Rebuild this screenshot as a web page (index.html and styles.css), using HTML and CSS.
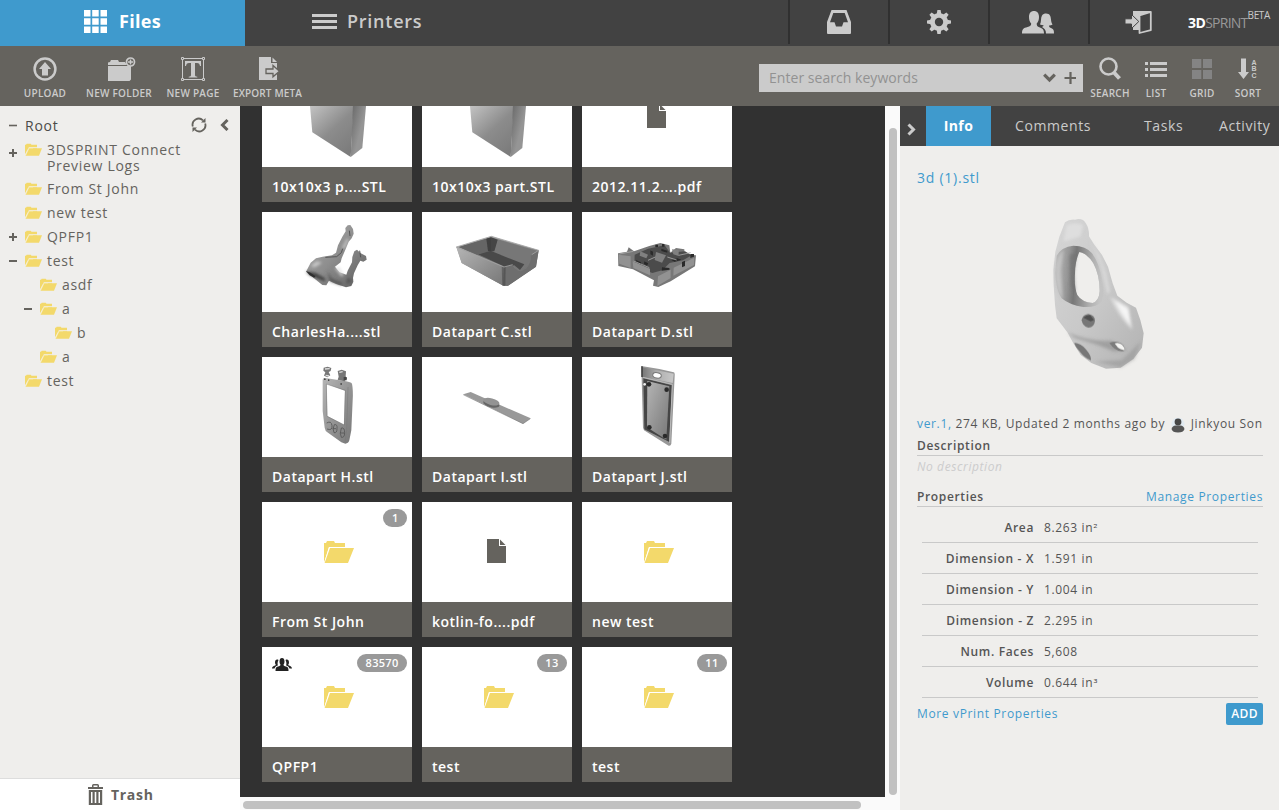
FILE: index.html
```html
<!DOCTYPE html>
<html lang="en">
<head>
<meta charset="utf-8">
<title>3DSPRINT Files</title>
<link rel="stylesheet" href="styles.css">
</head>
<body>
<svg class="defs" width="0" height="0">
  <defs>
    <linearGradient id="gBox" gradientUnits="userSpaceOnUse" x1="46" y1="30" x2="92" y2="80"><stop offset="0" stop-color="#d0d0d0"/><stop offset=".6" stop-color="#8c8c8c"/><stop offset="1" stop-color="#7c7c7c"/></linearGradient>
    <linearGradient id="gSide" gradientUnits="userSpaceOnUse" x1="92" y1="39" x2="104" y2="42"><stop offset="0" stop-color="#707070"/><stop offset="1" stop-color="#959595"/></linearGradient>
    <linearGradient id="gSkin" x1="0" y1="0" x2="1" y2="1"><stop offset="0" stop-color="#b0b0b0"/><stop offset="0.5" stop-color="#8d8d8d"/><stop offset="1" stop-color="#5c5c5c"/></linearGradient>
    <linearGradient id="gDev" x1="0" y1="0" x2="1" y2="1"><stop offset="0" stop-color="#b5b5b5"/><stop offset="0.6" stop-color="#8f8f8f"/><stop offset="1" stop-color="#777"/></linearGradient>
    <linearGradient id="gTop" x1="0" y1="0" x2="1" y2="0"><stop offset="0" stop-color="#777"/><stop offset="0.5" stop-color="#b0b0b0"/><stop offset="1" stop-color="#c8c8c8"/></linearGradient>
    <linearGradient id="gBone" x1="0" y1="0" x2="1" y2="1"><stop offset="0" stop-color="#d6d6d6"/><stop offset="0.5" stop-color="#c9c9c9"/><stop offset="1" stop-color="#b2b2b2"/></linearGradient>
    <linearGradient id="gHole" x1="0" y1="0" x2="1" y2="0.1"><stop offset="0" stop-color="#bcbcbc"/><stop offset="0.3" stop-color="#959595"/><stop offset="0.45" stop-color="#777"/><stop offset="0.8" stop-color="#b0b0b0"/><stop offset="1" stop-color="#c4c4c4"/></linearGradient>
    <filter id="soft" x="-20%" y="-20%" width="140%" height="140%"><feGaussianBlur stdDeviation="4"/></filter>
    <filter id="soft1" x="-10%" y="-10%" width="120%" height="120%"><feGaussianBlur stdDeviation="1.2"/></filter>
  </defs>
  <symbol id="folder" viewBox="0 0 30 22"><path fill="#f3d96b" d="M0 22V2h2l1-2h7l1 2h10v4H5z"/><path fill="#fff" d="M0 22L5 6h16v1H6L1 22z"/><path fill="#f3d96b" d="M6 7h24l-6 15H.6z"/></symbol>
  <symbol id="folder-s" viewBox="0 0 17 12.5"><path fill="#f3d96b" d="M0 11V1.500h1L1.700.5h4l.8 1H12v2.300H4z"/><path fill="#f5df86" d="M3.500 4.500H12v1H3z"/><path fill="#f3d96b" d="M4 5h13l-3 7.500H.5z"/><path fill="none" stroke="#faf0c0" stroke-width=".7" d="M.6 12L4 4.700h4"/></symbol>
  <symbol id="file" viewBox="0 0 19 24"><path fill="#65635e" d="M0 0h12v7h7v17H0z"/><path fill="#65635e" d="M13 .5L18.500 6H13z"/></symbol>
  <symbol id="box" viewBox="0 0 150 100"><path fill="url(#gBox)" d="M46 8L92 14 91.700 39 88.700 90 50.300 65.300 48 39z"/><path fill="url(#gSide)" d="M92 14l13-4-1 29-3.700 42L88.700 90z"/></symbol>
</svg>

<div class="app">
  <header class="top">
    <div class="tab tab-files"><svg width="23" height="23" viewBox="0 0 23 23"><path fill="#fff" d="M0 0h6.500v6.500H0zM8.200 0h6.500v6.500H8.200zM16.500 0H23v6.500h-6.500zM0 8.200h6.500v6.500H0zM8.200 8.200h6.500v6.500H8.200zM16.500 8.200H23v6.500h-6.500zM0 16.500h6.500V23H0zM8.200 16.500h6.500V23H8.200zM16.500 16.500H23V23h-6.500z"/></svg><span>Files</span></div>
    <div class="tab tab-printers"><svg width="25" height="15" viewBox="0 0 25 15"><path fill="#cbcbcb" d="M0 0h25v3H0zM0 6h25v3H0zM0 12h25v3H0z"/></svg><span>Printers</span></div>
    <nav class="actions">
      <a class="action"><svg width="24" height="24" viewBox="0 0 24 24"><path fill="#cbcbcb" fill-rule="evenodd" d="M4.500 0h15L24 12v11a1 1 0 0 1-1 1H1a1 1 0 0 1-1-1V12zM6.300 3L3 12.200h4.500l1.500 4.300h6l1.500-4.300H21L17.700 3z"/></svg></a>
      <a class="action"><svg width="24" height="24" viewBox="-12 -12 24 24"><g fill="#cbcbcb"><path d="M-2.300-8L-1.600-12h3.200L2.300-8V8L1.600 12h-3.200L-2.300 8z" id="tooth"/><use href="#tooth" transform="rotate(45)"/><use href="#tooth" transform="rotate(90)"/><use href="#tooth" transform="rotate(135)"/><circle r="9"/></g><circle r="4.200" fill="#424242"/></svg></a>
      <a class="action shift"><svg width="32" height="23" viewBox="0 0 32 23"><path fill="#cbcbcb" d="M7 6C7 2 9 0 12 0s5 2 5 6c0 3-.8 5-2.300 6.500 0 2 .5 3 2 3.500 3.500 1.200 5.300 2 5.300 6.500H0c0-4.500 1.500-5.500 5.500-6.500 2.500-.7 3.700-1.200 3.700-3.500C7.700 11 7 9 7 6z"/><path fill="#cbcbcb" d="M18 13.500c1.500-3 .5-6.500 2-9C21 3 22.500 2.500 24 2.500c4 0 4.800 3 5 6 .2 2 .5 3.500 1.500 5-1 .8-2.500 1-3.500 1 0 1.500.8 2 2.500 2.800 2 1 2.500 2.200 2.500 5.200h-8c0-3.500-1.500-5-4-6.500 1.200-.5 1.500-1 1.500-1.700-1.200 0-2.500-.2-3.500-.8z"/></svg></a>
      <a class="action shift"><svg width="27" height="24" viewBox="0 0 27 24"><path fill="#cbcbcb" d="M8 1h18v3l-11 3v13H8z"/><path fill="#424242" stroke="#cbcbcb" stroke-width="1.800" stroke-linejoin="round" d="M14.500 5.500L25.800 1.800v18.400L14.500 23z"/><path fill="#cbcbcb" stroke="#424242" stroke-width="1" d="M0 8.800h6.500V4.500L13.800 11.500 6.500 18.500V14H0z"/></svg></a>
      <div class="logo"><b>3D</b><span>SPRINT</span><sup>BETA</sup></div>
    </nav>
  </header>

  <div class="toolbar">
    <div class="tools">
      <div class="tool t-upload"><svg width="24" height="24" viewBox="0 0 24 24"><circle cx="12" cy="12" r="10.400" fill="none" stroke="#cbcbcb" stroke-width="2.500"/><path fill="#cbcbcb" d="M12 5l6 7h-3v6.500H9V12H6z"/></svg><span>UPLOAD</span></div>
      <div class="tool t-folder"><svg width="28" height="24" viewBox="0 0 28 24"><path fill="#cbcbcb" d="M0 24V9h23v13.500L21.500 24zM0 8V5.500l2-.5 1-2h7l1 2h6l2 3z"/><circle cx="22.500" cy="5" r="4" fill="#65635e" stroke="#cbcbcb" stroke-width="1.700"/><path stroke="#cbcbcb" stroke-width="1.500" d="M20 5h5M22.500 2.500v5"/></svg><span>NEW FOLDER</span></div>
      <div class="tool t-page"><svg width="26" height="26" viewBox="0 0 26 26"><path fill="none" stroke="#cbcbcb" d="M2.500 2.500h21v21h-21z"/><path fill="#65635e" stroke="#cbcbcb" d="M1.500 1.500h2v2h-2zM22.500 1.500h2v2h-2zM1.500 22.500h2v2h-2zM22.500 22.500h2v2h-2z"/><path fill="#cbcbcb" d="M5 5h16v5h-1c-.4-2-1-3-3-3h-2v12c0 1.200.6 1.500 2.300 1.700v.8H8.700v-.8c1.700-.2 2.300-.5 2.300-1.700V7H9C7 7 6.400 8 6 10H5z"/></svg><span>NEW PAGE</span></div>
      <div class="tool t-export"><svg width="22" height="23" viewBox="0 0 22 23"><path fill="#cbcbcb" d="M1 0h12v6h6v17H1z"/><path fill="#cbcbcb" d="M14.500.5L19 5h-4.500z"/><path fill="#cbcbcb" stroke="#65635e" stroke-width="1.300" d="M8 12h7V8.500l6.500 5.700-6.500 5.600V16.500H8z"/></svg><span>EXPORT META</span></div>
    </div>
    <div class="search"><span class="placeholder">Enter search keywords</span><svg width="34" height="12" viewBox="0 0 34 12"><path fill="none" stroke="#65635e" stroke-width="3.200" d="M2.200 2.700L7.500 8l5.300-5.300"/><path stroke="#65635e" stroke-width="2.200" d="M22.500 6h12M28.500 0v12"/></svg></div>
    <div class="views">
      <div class="view v-search"><svg width="22" height="24" viewBox="0 0 22 24"><circle cx="9.500" cy="9.500" r="8" fill="none" stroke="#cbcbcb" stroke-width="2.600"/><path stroke="#cbcbcb" stroke-width="4" d="M14.500 15l6 6.500"/></svg><span>SEARCH</span></div>
      <div class="view v-list"><svg width="22" height="24" viewBox="0 0 22 24"><path fill="#cbcbcb" d="M0 5h3v3H0zM5 5h17v3H5zM0 11h3v3H0zM5 11h17v3H5zM0 17h3v3H0zM5 17h17v3H5z"/></svg><span>LIST</span></div>
      <div class="view v-grid"><svg width="20" height="24" viewBox="0 0 20 24"><path fill="#848484" d="M0 2h9.300v9H0zM11 2h9v9h-9zM0 13h9.300v9H0zM11 13h9v9h-9z"/></svg><span>GRID</span></div>
      <div class="view v-sort"><svg width="20" height="24" viewBox="0 0 20 24"><path fill="#cbcbcb" d="M3 1.500h5V15h3L5.500 22 0 15h3z"/><g class="abc"><text x="13.500" y="7.500">A</text><text x="13.500" y="14">B</text><text x="13.500" y="20.500">C</text></g></svg><span>SORT</span></div>
    </div>
  </div>

  <main class="body">
    <aside class="side">
      <div class="root"><svg class="tg" width="8" height="8" viewBox="0 0 8 8"><path stroke="#65635e" stroke-width="1.600" d="M0 3.500h8"/></svg><span>Root</span>
        <svg class="refresh" width="16" height="16" viewBox="0 0 16 16"><path fill="none" stroke="#65635e" stroke-width="1.800" d="M1.800 9.500A6.200 6.200 0 0 1 12 3.300M14.200 6.500A6.200 6.200 0 0 1 4 12.700"/><path fill="#65635e" d="M14.500 1v4.500H10zM1.500 15v-4.500H6z"/></svg>
        <svg width="9" height="12" viewBox="0 0 9 12"><path fill="none" stroke="#65635e" stroke-width="3" d="M7.500 1L2.500 6l5 5"/></svg></div>
      <ul class="tree">
        <li class="two"><i class="plus"></i><svg class="fs"><use href="#folder-s"/></svg><span>3DSPRINT Connect Preview Logs</span></li>
        <li><i></i><svg class="fs"><use href="#folder-s"/></svg><span>From St John</span></li>
        <li><i></i><svg class="fs"><use href="#folder-s"/></svg><span>new test</span></li>
        <li><i class="plus"></i><svg class="fs"><use href="#folder-s"/></svg><span>QPFP1</span></li>
        <li><i class="minus"></i><svg class="fs"><use href="#folder-s"/></svg><span>test</span></li>
        <li class="l1"><i></i><svg class="fs"><use href="#folder-s"/></svg><span>asdf</span></li>
        <li class="l1"><i class="minus"></i><svg class="fs"><use href="#folder-s"/></svg><span>a</span></li>
        <li class="l2"><i></i><svg class="fs"><use href="#folder-s"/></svg><span>b</span></li>
        <li class="l1"><i></i><svg class="fs"><use href="#folder-s"/></svg><span>a</span></li>
        <li><i></i><svg class="fs"><use href="#folder-s"/></svg><span>test</span></li>
      </ul>
      <div class="trash"><svg width="15" height="21" viewBox="0 0 15 21"><path fill="#65635e" fill-rule="evenodd" d="M4 3V1.500Q4 0 5.500 0h4Q11 0 11 1.500V3h4v2H0V3zM5.500 3h4V1.500h-4zM.8 6h13.400v15H.8zM3 8v11h1.500V8zM6.700 8v11h1.600V8zM10.500 8v11H12V8z"/></svg><span>Trash</span></div>
    </aside>

    <section class="content">
      <div class="viewport">
        <div class="cards">
          <div class="card"><div class="thumb"><svg width="150" height="100"><use href="#box"/></svg></div><p>10x10x3 p....STL</p></div>
          <div class="card"><div class="thumb"><svg width="150" height="100"><use href="#box"/></svg></div><p>10x10x3 part.STL</p></div>
          <div class="card"><div class="thumb"><svg class="doc"><use href="#file"/></svg></div><p>2012.11.2....pdf</p></div>

          <div class="card"><div class="thumb"><svg width="150" height="100" viewBox="0 0 450 300"><g filter="url(#soft1)"><path fill="url(#gSkin)" d="M132 179l14-27 16-13 20-5 28-4 12-8 6-22 13-26 10-16-1-10 7-8 8-1 8 12 2 14-6 14-9 10-9 22-12 28-3 12-17 13 14 17 20 7 4-12 13-25 1-16 6-17 8-5 10 10 17 9 2 11-10 6-9-3-8 14-11 24-3 14 1 11-6 13-16 4-30-10-21-10-8 14-12-1z"/></g><g filter="url(#soft)"><path fill="#3a3a3a" d="M132 178l30 6 28 16-2 8-24-10-22-10z"/><path fill="#4a4a4a" opacity=".8" d="M196 178l14 22 32 14-4 6-34-12zM258 196l-6 20 18-8z"/><path fill="#e0e0e0" opacity=".7" d="M146 162l18-14 16 4-22 14zM218 168l14-4 14 26-8 4zM240 108l14-28 6 2-12 28z"/></g><g filter="url(#soft1)"><path fill="none" stroke="#555" stroke-width="3" d="M190 136l34-2 14-12 4-12M262 56l2 16M293 116l3 20"/><path fill="#2e2e2e" d="M132 177l14 5 14 10-3 5-14-7z"/></g></svg></div><p>CharlesHa....stl</p></div>
          <div class="card"><div class="thumb"><svg width="150" height="100" viewBox="0 0 450 300"><g filter="url(#soft1)"><path fill="url(#gSkin)" d="M103 105l105-32 142 42-8 49-84 57h-14L119 153z"/><path fill="#777" d="M110 105l97-29 136 40-13 12-6 20-25 23-16 3-10-14-27 5z"/><path fill="#494949" d="M168 127l34-12 105 42-13 17-17-14-27 5z"/><path fill="#656565" d="M110 105l97-29v40l-41 12z"/><path fill="#333" d="M193 80l14-4 20 7-10 35-19-1z" opacity=".75"/><path fill="url(#gDev)" d="M103 105l143 60-2 56L119 153z"/><path fill="#6e6e6e" d="M246 165l25-5q13 20 28 17 28-9 28-48l23-14-8 49-84 57h-14z"/><path fill="#333" opacity=".4" d="M239 163h12l-1 58h-9z"/><path fill="none" stroke="#a4a4a4" stroke-width="2.500" d="M103 105l105-32 142 42-21 13M103 105l143 60 26-7"/></g></svg></div><p>Datapart C.stl</p></div>
          <div class="card"><div class="thumb"><svg width="150" height="100" viewBox="0 0 450 300"><g filter="url(#soft1)"><path fill="#777" d="M108 124l27-5 5-13 16 12 46-16 33-9 27 7 3 22 17-14 25 4 1 16 34 2-3 33-73 45-37 17-16-4 3-16-63-33-44-10z"/><path fill="#4c4c4c" d="M158 128l40-18 50-10 16 22 45-4 20 12-26 15-40 8-22 22-30 8-54-22z"/><path fill="#929292" d="M110 128l36 5v35l-34-13zM152 148l52 22v20l-50-22zM228 193l38-20v25l-40 24zM275 167l62-30-1 22-62 32z"/><path fill="#808080" d="M222 120l30 10-12 22-22-8zM175 118l23 10-5 11-20-8zM270 112l20 2v18l-16-5z"/><path fill="#2a2a2a" d="M220 98h8v7h-8zM240 96h7v8h-7zM205 115l8 4v12l-8-4zM238 110l18 6v6l-18-5zM162 144l15 7v6l-15-7zM240 166l22 2 1 5-24 3zM325 126h11v8l-11 4zM300 150l9-4v16l-9 4zM187 148l12 6-4 7-9-5zM268 144l18-5 12 4-20 6z"/><path stroke="#a8a8a8" stroke-width="2.500" fill="none" d="M112 126l42-8M198 145l22-10M256 135l28 9M290 130l36-8M155 147l47 20"/></g></svg></div><p>Datapart D.stl</p></div>

          <div class="card"><div class="thumb"><svg width="150" height="100" viewBox="0 0 450 300"><g filter="url(#soft1)"><path fill="url(#gDev)" fill-rule="evenodd" d="M182 68q0-6 8-5l62 10q14 2 18 7 4 20 2 50l-4 90-6 30q-3 10-12 10l-12-4-42-30q-6-3-8-14l-6-50zM194 81l2 96 50 26 3-102z"/><path fill="none" stroke="#777" stroke-width="1.500" d="M193 81l57 19-3 104-52-26zM258 90l-4 130-5 36"/><path fill="#777" d="M185 32l12-3 11 4-2 9-6 3 5 10-9 6-10-5 4-10-6-5zM227 42l12-4 13 5-1 15 4 7-8 8-20-5 3-9z"/><path stroke="#ddd" stroke-width="4" d="M189 36l14-1M232 46l10-2M191 55l10 2"/><path fill="none" stroke="#555" stroke-width="2.500" d="M194 198q14-8 16 8t-15 10M217 203q10-2 8 12 0 14-9 12-6-10 1-24zM238 213q10-2 10 14 0 16-10 14-6-10 0-28zM212 215h10M235 228h12"/><path fill="#444" d="M245 60h9v10h-9zM186 64l5 1v4h-5zM198 67h4v5h-4zM235 79h5v4h-5z"/></g></svg></div><p>Datapart H.stl</p></div>
          <div class="card"><div class="thumb"><svg width="150" height="100" viewBox="0 0 450 300"><g filter="url(#soft1)"><path fill="#999" d="M124 112l22-7 180 79-23 16z"/><path fill="none" stroke="#777" stroke-width="2" d="M124 113l179 87 22-15"/><ellipse cx="208" cy="140" rx="25" ry="11" transform="rotate(14 208 140)" fill="#666"/><ellipse cx="208" cy="134" rx="25" ry="10" transform="rotate(14 208 134)" fill="#939393"/></g></svg></div><p>Datapart I.stl</p></div>
          <div class="card"><div class="thumb"><svg width="150" height="100" viewBox="0 0 450 300"><g filter="url(#soft1)"><path fill="#989898" d="M178 27q50 7 97 19 4 1 3 12l-10 202q-2 8-8 6l-74-46-3-8z"/><path fill="url(#gTop)" d="M181 31l94 19-3 28-90-18z"/><path fill="#444" d="M184 64l86 21-8 170-75-38z"/><path fill="url(#gDev)" d="M196 72l66 16-9 160-58-37z"/><ellipse cx="225" cy="55" rx="13" ry="8" fill="#fff" stroke="#777" stroke-width="3" transform="rotate(10 225 55)"/><path fill="none" stroke="#bbb" stroke-width="3" d="M183 61l88 21-8 176"/><g fill="#2c2c2c"><circle cx="201" cy="82" r="7"/><circle cx="254" cy="98" r="7"/><circle cx="202" cy="211" r="7"/><circle cx="249" cy="237" r="7"/><path d="M178 28h4v32h-4z"/></g><circle cx="188" cy="82" r="4" fill="#eee"/></g></svg></div><p>Datapart J.stl</p></div>

          <div class="card"><div class="thumb"><svg class="fl"><use href="#folder"/></svg><em class="badge">1</em></div><p>From St John</p></div>
          <div class="card"><div class="thumb"><svg class="doc"><use href="#file"/></svg></div><p>kotlin-fo....pdf</p></div>
          <div class="card"><div class="thumb"><svg class="fl"><use href="#folder"/></svg></div><p>new test</p></div>

          <div class="card"><div class="thumb"><svg class="fl"><use href="#folder"/></svg><svg class="group" width="20" height="13" viewBox="0 0 20 13"><path fill="#222" d="M7.500 3.500C7.500 1 8.500 0 10 0s2.500 1 2.500 3.500c0 1.500-.5 2.500-1 3.200.2 1 .8 1.300 2.500 1.800 2 .6 2.500 1.500 2.500 4.500h-13c0-3 .5-3.900 2.500-4.500 1.700-.5 2.300-.8 2.500-1.800-.5-.7-1-1.700-1-3.200zM6.500 2C4.500 1 3 2 3 4.500c0 1 .3 1.700.8 2.300C3.500 8 0 8 0 10.500h2.500C3 8.500 5 8 6 7.300 5.300 6.500 5.500 4 6.500 2zM13.500 2c2-1 3.500 0 3.500 2.500 0 1-.3 1.700-.8 2.300C16.500 8 20 8 20 10.500h-2.500C17 8.500 15 8 14 7.300c.7-.8.5-3.300-.5-5.300z"/></svg><em class="badge">83570</em></div><p>QPFP1</p></div>
          <div class="card"><div class="thumb"><svg class="fl"><use href="#folder"/></svg><em class="badge">13</em></div><p>test</p></div>
          <div class="card"><div class="thumb"><svg class="fl"><use href="#folder"/></svg><em class="badge">11</em></div><p>test</p></div>
        </div>
        <div class="vbar"><div class="vthumb"></div></div>
      </div>
      <div class="hbar"><div class="hthumb"></div></div>
    </section>

    <aside class="info">
      <div class="tabs">
        <div class="collapse"><svg width="9" height="13" viewBox="0 0 9 13"><path fill="none" stroke="#cbcbcb" stroke-width="3" d="M1.500 1.500l5 5-5 5"/></svg></div>
        <div class="on">Info</div><div class="t-com">Comments</div><div class="t-task">Tasks</div><div class="t-act">Activity</div>
      </div>
      <div class="detail">
        <h2>3d (1).stl</h2>
        <svg class="model" width="130" height="175" viewBox="0 0 390 525">
          <g filter="url(#soft1)"><path fill="url(#gBone)" fill-rule="evenodd" d="M105 52Q118 42 135 44 158 38 167 54 178 70 177 94L192 118 216 150 234 185 248 235 262 272 290 293 318 308 331 345 341 385 336 428 310 462 272 488 228 491 184 474 152 450 130 415 112 382 80 340 75 300 71 240 70 195 76 140 88 95zM148 141Q135 170 135 205 132 245 142 270 155 291 188 294 207 288 209 258 209 210 190 175 172 145 148 141z"/>
          <path fill="url(#gHole)" fill-rule="evenodd" d="M80 152Q95 125 130 122 168 122 186 145 208 175 217 225 225 260 215 290 200 308 160 306 118 300 95 280 78 255 76 205zM148 141Q135 170 135 205 132 245 142 270 155 291 188 294 207 288 209 258 209 210 190 175 172 145 148 141z"/></g>
          <g filter="url(#soft)"><path fill="#c4c4c4" d="M76 180q10-35 24-45l-8 60 6 90q-18-20-22-60z"/><path fill="#6f6f6f" opacity=".6" d="M118 150l22-8-8 60 4 60-14-20z"/><path fill="#d9d9d9" d="M182 108l28 46 18 50 12 55-8 10-20-90z"/><path fill="#dedede" d="M240 275l55 30 12 70q-45-45-67-100z"/><path fill="#f5f5f5" d="M255 285l40 28 8 50q-32-40-48-78z"/><path fill="#939393" d="M112 382q70 30 130 25l50 28-40 4-56-22-60-18z" opacity=".7"/><path fill="#dedede" d="M110 60q25-10 50 0l-10 35-50 15z"/><path fill="#969696" opacity=".55" d="M195 470l80-5 58-55-20 52-40 25z"/></g>
          <g filter="url(#soft1)"><path fill="#777" d="M155 345q3-16 20-18 20 4 20 20-2 20-20 21-18-4-20-23z"/><path fill="#505050" d="M160 338q8-8 20-8l12 15-10 4z"/><path fill="#777" d="M133 413q20 2 35 20 17 20 15 33-20-8-34-27-14-14-16-26z"/><path fill="#7c7c7c" d="M238 414q20-8 36 1 11 8 10 22-24 8-46-23z"/><path fill="#f5f5f3" d="M254 415q12-4 22 4 8 8 8 17-14-3-20-8z"/></g>
        </svg>
        <div class="meta"><a>ver.1,</a> 274 KB, Updated 2 months ago by <svg width="14" height="15" viewBox="0 0 14 15"><circle cx="7" cy="6" r="6.500" fill="#e1eaf1"/><circle cx="7" cy="4" r="3.400" fill="#454545"/><path fill="#555" d="M.5 11q1-3.500 4-3.500h5q3 0 4 3.500-1 3.500-6.500 3.500T.5 11z"/></svg> Jinkyou Son</div>
        <div class="head"><b>Description</b></div>
        <p class="none">No description</p>
        <div class="head props-head"><b>Properties</b><a>Manage Properties</a></div>
        <dl class="props">
          <div><dt>Area</dt><dd>8.263 in<span class="pow">²</span></dd></div>
          <div><dt>Dimension - X</dt><dd>1.591 in</dd></div>
          <div><dt>Dimension - Y</dt><dd>1.004 in</dd></div>
          <div><dt>Dimension - Z</dt><dd>2.295 in</dd></div>
          <div><dt>Num. Faces</dt><dd>5,608</dd></div>
          <div><dt>Volume</dt><dd>0.644 in<span class="pow">³</span></dd></div>
        </dl>
        <div class="more"><a>More vPrint Properties</a><button>ADD</button></div>
      </div>
    </aside>
  </main>
</div>
</body>
</html>
```
FILE: styles.css
```css
* { box-sizing: border-box; }
body { margin: 0; font-family: "Open Sans", "Noto Sans", sans-serif; color: #555; overflow: hidden; }
svg { display: block; flex: none; }
.defs { position: absolute; }
p, h2, ul, dl, dd { margin: 0; padding: 0; }
a { color: #3f9acd; }
.app { width: 1279px; height: 810px; display: flex; flex-direction: column; }

.top { height: 46px; background: #424242; display: flex; flex: none; }
.tab { display: flex; align-items: center; font-size: 18px; font-weight: 600; line-height: 24px; padding-bottom: 4px; }
.tab-files { width: 245px; background: #3f9acd; color: #fff; padding-left: 84px; gap: 12px; font-weight: 700; letter-spacing: .3px; }
.tab-printers { width: 543px; color: #cbcbcb; padding-left: 67px; gap: 10px; letter-spacing: .75px; }
.actions { display: flex; flex: 1; height: 44px; }
.action { width: 100px; border-left: 2px solid #303030; display: flex; align-items: center; justify-content: center; }
.shift { padding-right: 2px; }
.logo { display: flex; align-items: flex-start; padding-top: 13px; font-size: 14px; line-height: 20px; letter-spacing: -.6px; color: #999; }
.logo b { color: #fff; }
.logo span { font-size: 14px; letter-spacing: -.75px; }
.logo sup { font-size: 10px; line-height: 12px; margin-top: -4px; letter-spacing: -.4px; color: #cbcbcb; }

.toolbar { height: 60px; background: #65635e; display: flex; flex: none; font-size: 10px; font-weight: 600; line-height: 14px; color: #cbcbcb; letter-spacing: .25px; }
.tools { display: flex; width: 759px; padding-left: 8px; }
.tool, .view { display: flex; flex-direction: column; align-items: center; justify-content: space-between; height: 54px; padding-top: 11px; white-space: nowrap; }
.t-upload, .t-page, .t-export, .t-folder { width: 74px; }
.t-folder svg { margin-left: 5px; }
.t-page { padding-top: 10px; }
.t-export svg { margin-left: 3px; }
.t-export { letter-spacing: .15px; padding-left: 1px; }
.search { width: 324px; height: 28px; margin-top: 18px; background: #cbcbcb; display: flex; align-items: center; justify-content: space-between; padding: 0 7px 0 10px; font-size: 14px; font-weight: 400; letter-spacing: .04px; color: #929292; }
.views { display: flex; padding-left: 4px; }
.view { width: 46px; }
.abc { font: bold 7px "Liberation Sans", sans-serif; fill: #cbcbcb; }

.body { height: 704px; display: flex; }
.side { width: 240px; background: #efeeec; display: flex; flex-direction: column; font-size: 14px; line-height: 16px; letter-spacing: .7px; color: #65635e; }
.root { display: flex; align-items: center; height: 32px; padding: 8px 11px 0 9px; color: #4c4b48; }
.root span { margin-left: 8px; flex: 1; letter-spacing: .75px; }
.refresh { margin: 0 13px 2px 0; }
.root svg:last-child { margin-bottom: 2px; }
.tree { list-style: none; flex: 1; }
.tree li { display: flex; padding: 4px 0 4px 9px; }
.tree li.two { padding-bottom: 3px; padding-right: 50px; }
.tree li.l1 { padding-left: 24px; }
.tree li.l2 { padding-left: 39px; }
.tree i { flex: none; width: 8px; height: 16px; margin-right: 8px; }
.plus { background: linear-gradient(#65635e, #65635e) 0 7px / 8px 2px no-repeat, linear-gradient(#65635e, #65635e) 3px 4px / 2px 8px no-repeat; }
.two .plus { margin-top: 3px; }
.minus { background: linear-gradient(#65635e, #65635e) 0 7px / 8px 2px no-repeat; }
.fs { width: 17px; height: 13px; margin: 1px 5px 0 0; }
.trash { height: 32px; background: #fff; border-top: 1px solid #ddd; display: flex; align-items: center; padding-left: 88px; gap: 8px; font-weight: 700; }

.content { width: 660px; display: flex; flex-direction: column; }
.viewport { height: 691px; background: #313131; display: flex; justify-content: space-between; overflow: hidden; }
.cards { display: grid; grid-template-columns: repeat(3, 150px); grid-auto-rows: 135px; gap: 10px; margin: -39px 0 0 22px; }
.thumb { position: relative; height: 100px; background: #fff; overflow: hidden; }
.fl { width: 30px; height: 22px; margin: 39px 0 0 62px; }
.doc { width: 19px; height: 24px; margin: 37px 0 0 65px; }
.card p { height: 35px; padding: 10px 0 0 10px; background: #65635e; color: #fff; font-size: 14px; font-weight: 600; line-height: 20px; letter-spacing: .5px; white-space: nowrap; }
.badge { position: absolute; right: 5px; top: 7px; height: 18px; border-radius: 9px; background: #999; color: #fff; font: 600 11px/18px "Open Sans", sans-serif; letter-spacing: .3px; padding: 0 8.500px; }
.group { position: absolute; left: 10px; top: 11px; }
.vbar { width: 15px; background: #fafafa; padding: 22px 0 0 4px; }
.vthumb { width: 8px; height: 667px; border-radius: 4px; background: #c1c1c1; }
.hbar { height: 13px; background: #fafafa; padding: 4px 0 0 3px; }
.hthumb { width: 618px; height: 8px; border-radius: 4px; background: #c1c1c1; }

.info { width: 379px; background: #efeeec; }
.tabs { display: flex; height: 40px; background: #424242; color: #cbcbcb; font-size: 14px; line-height: 40px; letter-spacing: .6px; white-space: nowrap; overflow: hidden; }
.collapse { width: 26px; padding: 17px 0 0 7px; }
.on { width: 65px; text-align: center; background: #3f9acd; color: #fff; font-weight: 700; letter-spacing: .4px; }
.t-com { margin-left: 24px; width: 129px; }
.t-task { width: 75px; }
.detail { padding: 22px 16px 0 17px; font-size: 12px; line-height: 18px; letter-spacing: .65px; }
.detail h2 { font-size: 14px; line-height: 20px; font-weight: 400; letter-spacing: .75px; color: #3f9acd; }
.model { margin: 17px 0 0 113px; }
.meta { display: flex; align-items: center; margin-top: 35px; white-space: pre; height: 18px; }
.meta svg { margin: 3px 2px 0 2px; }
.head { display: flex; justify-content: space-between; height: 23px; line-height: 18px; padding-top: 4px; border-bottom: 1px solid #c9c9c9; }
.head b { font-weight: 600; }
.none { color: #ccc; font-style: italic; font-weight: 500; letter-spacing: .6px; padding-top: 2px; height: 30px; }
.props-head { height: 21px; padding-top: 2px; }
.props { padding: 5px 5px 0; }
.props div { display: flex; height: 31px; border-bottom: 1px solid #c9c9c9; line-height: 32px; }
.props dt { width: 112px; text-align: right; margin-right: 10px; font-weight: 600; }
.pow { font-family: "DejaVu Sans", sans-serif; font-size: 11px; line-height: 1; }
.more { display: flex; justify-content: space-between; padding-top: 5px; line-height: 22px; }
.more button { width: 37px; height: 22px; border: 0; border-radius: 2px; background: #3f9acd; color: #fff; font: 600 12px/22px "Open Sans", sans-serif; letter-spacing: .4px; padding: 0; }
```
